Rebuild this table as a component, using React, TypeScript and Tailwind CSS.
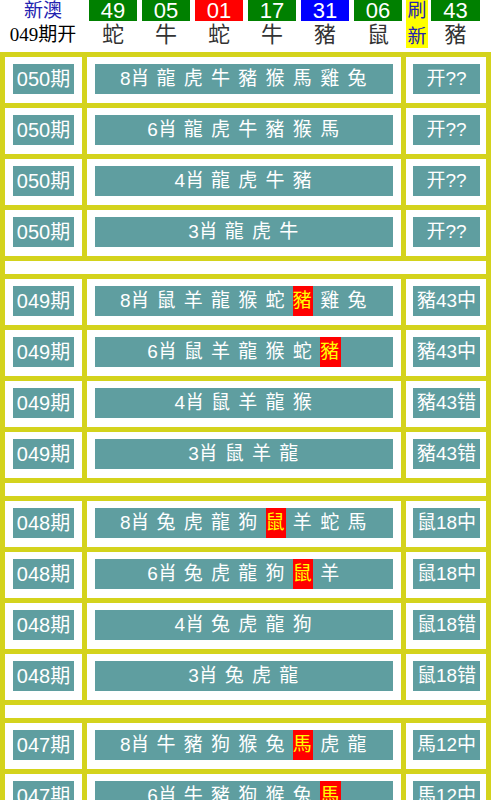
const balls = [
  { n: '49', z: '蛇', c: 'bg-[#008000]' },
  { n: '05', z: '牛', c: 'bg-[#008000]' },
  { n: '01', z: '蛇', c: 'bg-[#ff0000]' },
  { n: '17', z: '牛', c: 'bg-[#008000]' },
  { n: '31', z: '豬', c: 'bg-[#0000ff]' },
  { n: '06', z: '鼠', c: 'bg-[#008000]' },
]

type Row = { q: string; head: string; items: string[]; hit?: string; res: string }

const groups: Row[][] = [
  [
    { q: '050期', head: '8肖', items: ['龍', '虎', '牛', '豬', '猴', '馬', '雞', '兔'], res: '开??' },
    { q: '050期', head: '6肖', items: ['龍', '虎', '牛', '豬', '猴', '馬'], res: '开??' },
    { q: '050期', head: '4肖', items: ['龍', '虎', '牛', '豬'], res: '开??' },
    { q: '050期', head: '3肖', items: ['龍', '虎', '牛'], res: '开??' },
  ],
  [
    { q: '049期', head: '8肖', items: ['鼠', '羊', '龍', '猴', '蛇', '豬', '雞', '兔'], hit: '豬', res: '豬43中' },
    { q: '049期', head: '6肖', items: ['鼠', '羊', '龍', '猴', '蛇', '豬'], hit: '豬', res: '豬43中' },
    { q: '049期', head: '4肖', items: ['鼠', '羊', '龍', '猴'], res: '豬43错' },
    { q: '049期', head: '3肖', items: ['鼠', '羊', '龍'], res: '豬43错' },
  ],
  [
    { q: '048期', head: '8肖', items: ['兔', '虎', '龍', '狗', '鼠', '羊', '蛇', '馬'], hit: '鼠', res: '鼠18中' },
    { q: '048期', head: '6肖', items: ['兔', '虎', '龍', '狗', '鼠', '羊'], hit: '鼠', res: '鼠18中' },
    { q: '048期', head: '4肖', items: ['兔', '虎', '龍', '狗'], res: '鼠18错' },
    { q: '048期', head: '3肖', items: ['兔', '虎', '龍'], res: '鼠18错' },
  ],
  [
    { q: '047期', head: '8肖', items: ['牛', '豬', '狗', '猴', '兔', '馬', '虎', '龍'], hit: '馬', res: '馬12中' },
    { q: '047期', head: '6肖', items: ['牛', '豬', '狗', '猴', '兔', '馬'], hit: '馬', res: '馬12中' },
    { q: '047期', head: '4肖', items: ['牛', '豬', '狗', '猴'], res: '馬12错' },
    { q: '047期', head: '3肖', items: ['牛', '豬', '狗'], res: '馬12错' },
  ],
]

const font = { fontFamily: '"Liberation Sans", "Noto Sans CJK SC", sans-serif' }

const Header = () => (
  <div className="flex h-[52px]" style={font}>
    <div className="flex w-[86px] flex-col items-center">
      <div className="text-[19px] leading-[22px] text-[#2323b0]">新澳</div>
      <div
        className="mt-[2px] text-[19px] leading-[22px] text-black"
        style={{ fontFamily: '"Liberation Serif", "Noto Sans CJK SC", serif' }}
      >
        049期开
      </div>
    </div>
    <div className="ml-[3px] flex gap-[5px]">
      {balls.map((b, i) => (
        <div key={i} className="flex w-[48px] flex-col items-center">
          <div className={`flex h-[21px] w-full items-center justify-center text-[22px] leading-[21px] text-white ${b.c}`}>
            {b.n}
          </div>
          <div className="mt-[1px] text-[22px] leading-[26px] text-[#333]">{b.z}</div>
        </div>
      ))}
    </div>
    <div className="ml-[4px] flex h-[48px] w-[22px] flex-col items-center justify-between bg-[#ffff00] text-[19px] leading-[22px] text-[#2323b0]">
      <span>刷</span>
      <span>新</span>
    </div>
    <div className="ml-[3px] flex w-[49px] flex-col items-center">
      <div className="flex h-[21px] w-full items-center justify-center bg-[#008000] text-[22px] leading-[21px] text-white">
        43
      </div>
      <div className="mt-[1px] text-[22px] leading-[26px] text-[#333]">豬</div>
    </div>
  </div>
)

const Box = ({ children, extra }: { children: React.ReactNode; extra?: string }) => (
  <div
    className={`flex h-[30px] items-stretch justify-center whitespace-pre bg-[#5f9ea0] leading-[30px] text-white ${extra ?? 'text-[19px]'}`}
  >
    {children}
  </div>
)

const TableRow = ({ r }: { r: Row }) => (
  <>
    <div className="bg-white px-[8px] pt-[7px] pb-[9px]">
      <Box extra="text-[20px]">{r.q}</Box>
    </div>
    <div className="bg-white px-[8px] pt-[7px] pb-[9px]">
      <Box extra="text-[19px]">
        <span>{r.head}</span>
        {r.items.map((it, i) => (
          <span key={i} className="flex tracking-[1.5px]">
            <span> </span>
            {it === r.hit ? (
              <span className="bg-[#ff0000] text-[#ffff00]">{it}</span>
            ) : (
              <span>{it}</span>
            )}
          </span>
        ))}
      </Box>
    </div>
    <div className="bg-white pt-[7px] pb-[9px] pr-[6px] pl-[7px]">
      <Box>{r.res}</Box>
    </div>
  </>
)

export default function App() {
  return (
    <div className="h-[800px] w-[496px] overflow-hidden bg-white">
      <Header />
      <div className="grid w-[491px] grid-cols-[77px_314px_80px] gap-[5px] bg-[#d4d31c] p-[5px]" style={font}>
        {groups.map((g, gi) => (
          <>
            {g.map((r, ri) => (
              <TableRow key={`${gi}-${ri}`} r={r} />
            ))}
            {gi < groups.length - 1 ? <div key={`s${gi}`} className="col-span-3 h-[13px] bg-white" /> : null}
          </>
        ))}
      </div>
    </div>
  )
}
